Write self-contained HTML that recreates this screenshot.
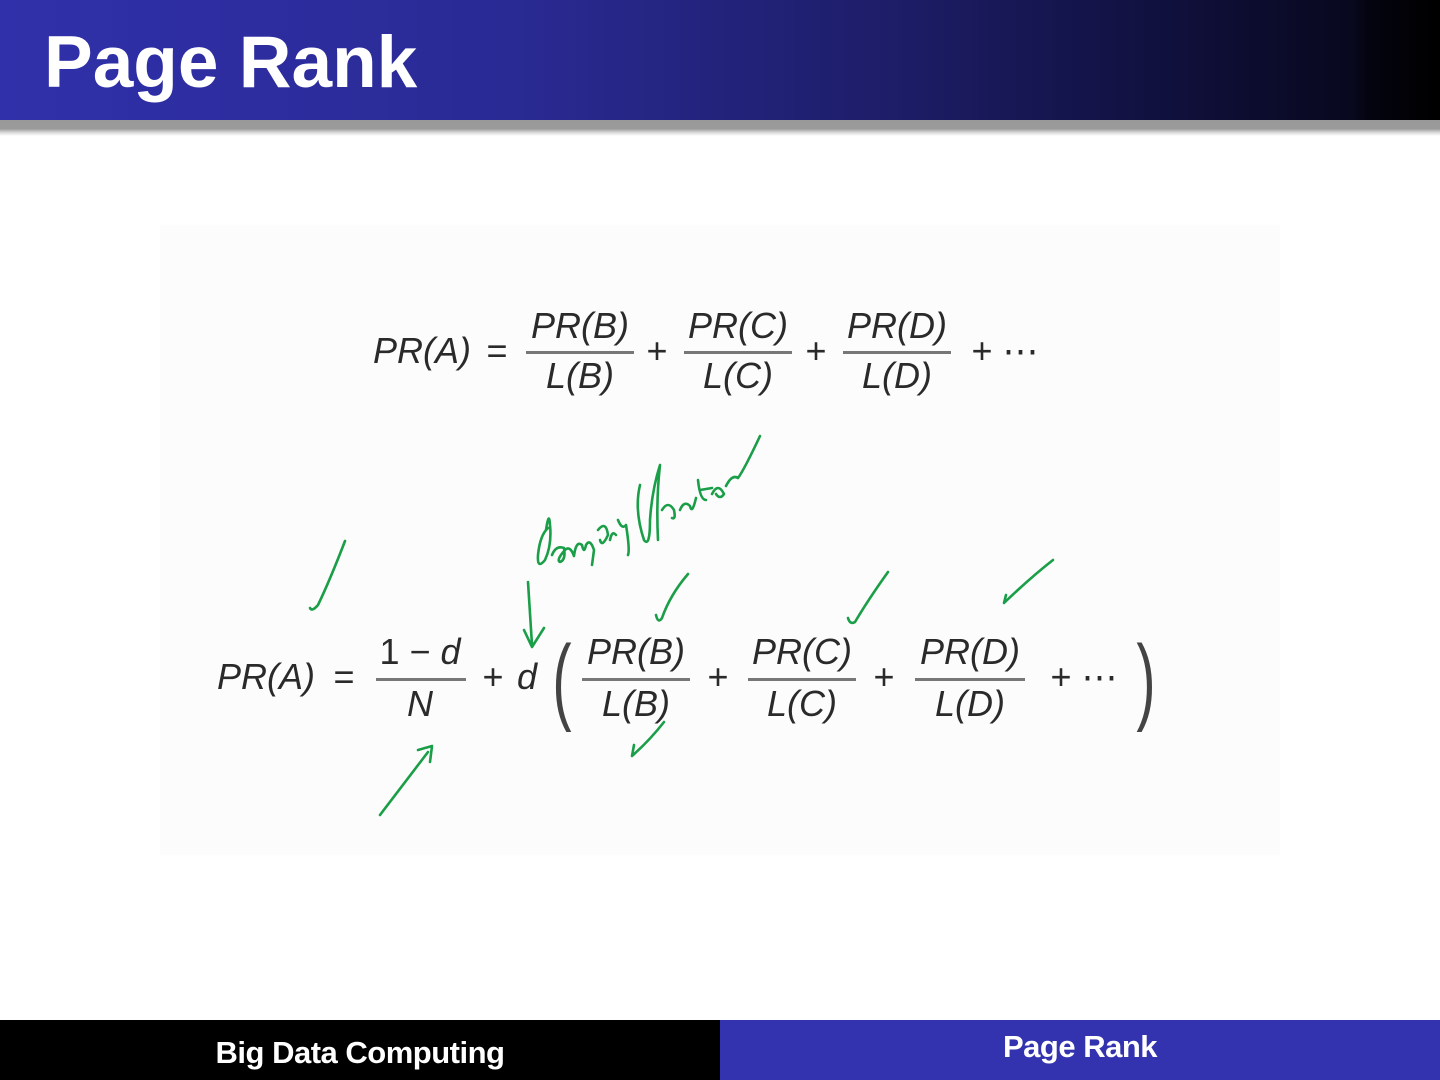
<!DOCTYPE html>
<html><head><meta charset="utf-8"><style>
html,body{margin:0;padding:0;width:1440px;height:1080px;overflow:hidden;background:#fff;font-family:"Liberation Sans",sans-serif}
.hdr{position:absolute;left:0;top:0;width:1440px;height:120px;background:linear-gradient(90deg,#3030aa 0%,#2a2a95 35%,#1d1d68 62%,#111140 80%,#08081e 94%,#040410 95%,#000 100%)}
.sh{position:absolute;left:0;top:120px;width:1440px;height:16px;background:linear-gradient(180deg,#999 0%,#9a9a9a 55%,#ddd 80%,#fff 100%)}
.title{position:absolute;left:44px;top:18px;color:#fff;font-weight:bold;font-size:73px;line-height:90px;letter-spacing:0px}
.img{position:absolute;left:160px;top:225px;width:1120px;height:630px;background:#fcfcfc}
.m{position:absolute;font-style:italic;color:#2a2a2a;font-size:36px;line-height:36px;white-space:nowrap;text-align:center}
.n{font-style:normal}
.bar{position:absolute;height:3px;background:#777}
.fl{position:absolute;left:0;top:1020px;width:720px;height:60px;background:#000}
.fr{position:absolute;left:720px;top:1020px;width:720px;height:60px;background:#3333b0}
.ft{position:absolute;color:#fff;font-weight:bold;font-size:31px;line-height:34px;text-align:center;letter-spacing:-0.5px}
</style></head><body>
<div class="hdr"></div><div class="sh"></div>
<div class="title">Page Rank</div>
<div class="img"></div>

<div class="m" style="left:372px;top:333px;width:100px">PR(A)</div>
<div class="m n" style="left:480px;top:333px;width:34px">=</div>
<div class="m" style="left:524px;top:308px;width:112px">PR(B)</div>
<div class="bar" style="left:526px;top:351px;width:108px"></div>
<div class="m" style="left:524px;top:358px;width:112px">L(B)</div>
<div class="m n" style="left:642px;top:333px;width:30px">+</div>
<div class="m" style="left:682px;top:308px;width:112px">PR(C)</div>
<div class="bar" style="left:684px;top:351px;width:108px"></div>
<div class="m" style="left:682px;top:358px;width:112px">L(C)</div>
<div class="m n" style="left:801px;top:333px;width:30px">+</div>
<div class="m" style="left:841px;top:308px;width:112px">PR(D)</div>
<div class="bar" style="left:843px;top:351px;width:108px"></div>
<div class="m" style="left:841px;top:358px;width:112px">L(D)</div>
<div class="m n" style="left:960px;top:333px;width:90px">+ ⋯</div>

<div class="m" style="left:212px;top:659px;width:108px">PR(A)</div>
<div class="m n" style="left:326px;top:659px;width:36px">=</div>
<div class="m" style="left:372px;top:634px;width:96px"><span class="n">1 − </span>d</div>
<div class="bar" style="left:376px;top:678px;width:90px"></div>
<div class="m" style="left:372px;top:686px;width:96px">N</div>
<div class="m n" style="left:476px;top:659px;width:34px">+</div>
<div class="m" style="left:512px;top:659px;width:30px">d</div>
<div class="m n" style="left:546px;top:632px;width:32px;font-size:96px;line-height:96px;color:#444;transform:scaleX(.6)">(</div>
<div class="m" style="left:580px;top:634px;width:112px">PR(B)</div>
<div class="bar" style="left:582px;top:678px;width:108px"></div>
<div class="m" style="left:580px;top:686px;width:112px">L(B)</div>
<div class="m n" style="left:702px;top:659px;width:32px">+</div>
<div class="m" style="left:746px;top:634px;width:112px">PR(C)</div>
<div class="bar" style="left:748px;top:678px;width:108px"></div>
<div class="m" style="left:746px;top:686px;width:112px">L(C)</div>
<div class="m n" style="left:868px;top:659px;width:32px">+</div>
<div class="m" style="left:913px;top:634px;width:114px">PR(D)</div>
<div class="bar" style="left:915px;top:678px;width:110px"></div>
<div class="m" style="left:913px;top:686px;width:114px">L(D)</div>
<div class="m n" style="left:1036px;top:659px;width:96px">+ ⋯</div>
<div class="m n" style="left:1130px;top:632px;width:32px;font-size:96px;line-height:96px;color:#444;transform:scaleX(.6)">)</div>

<svg style="position:absolute;left:0;top:0" width="1440" height="1080" fill="none" stroke="#1a9e48" stroke-width="2.6" stroke-linecap="round" stroke-linejoin="round">
<path d="M345 541 Q330 580 318 605 Q312 612 310 608"/>
<path d="M528 582 Q530 615 532 645 M524 630 L532 647 L544 628"/>
<path d="M380 815 L428 752 M418 750 L432 746 L430 762"/>
<path d="M688 574 Q670 595 662 618 Q658 624 656 615"/>
<path d="M888 572 Q868 600 855 622 Q850 625 848 618"/>
<path d="M1053 560 Q1030 578 1004 603 L1006 595"/>
<path d="M664 722 Q650 740 632 756 L634 745"/>
<path d="M548 528 Q540 535 538 555 Q537 570 545 560 Q552 545 550 525 Q549 510 546 530 M552 555 Q556 545 564 548 Q566 560 560 562 Q556 560 565 550 Q570 545 574 556 Q576 540 582 545 Q584 555 586 545 Q590 538 594 550 L592 565 M598 530 Q606 520 608 535 Q602 548 600 540 M610 540 Q612 530 616 535 M618 520 Q622 530 626 525 Q630 550 628 555 M640 485 Q634 510 644 540 Q650 548 650 520 Q652 490 660 465 Q656 500 658 540 M662 510 Q668 500 674 510 Q676 520 672 518 M680 510 Q684 500 690 506 Q692 515 696 498 M698 480 Q700 500 706 500 M700 490 L712 488 M712 494 Q718 482 724 494 Q720 500 716 494 M726 486 Q732 474 738 478 Q744 470 760 436"/>
</svg>

<div class="fl"></div><div class="fr"></div>
<div class="ft" style="left:0;top:1036px;width:720px">Big Data Computing</div>
<div class="ft" style="left:720px;top:1030px;width:720px">Page Rank</div>
</body></html>
